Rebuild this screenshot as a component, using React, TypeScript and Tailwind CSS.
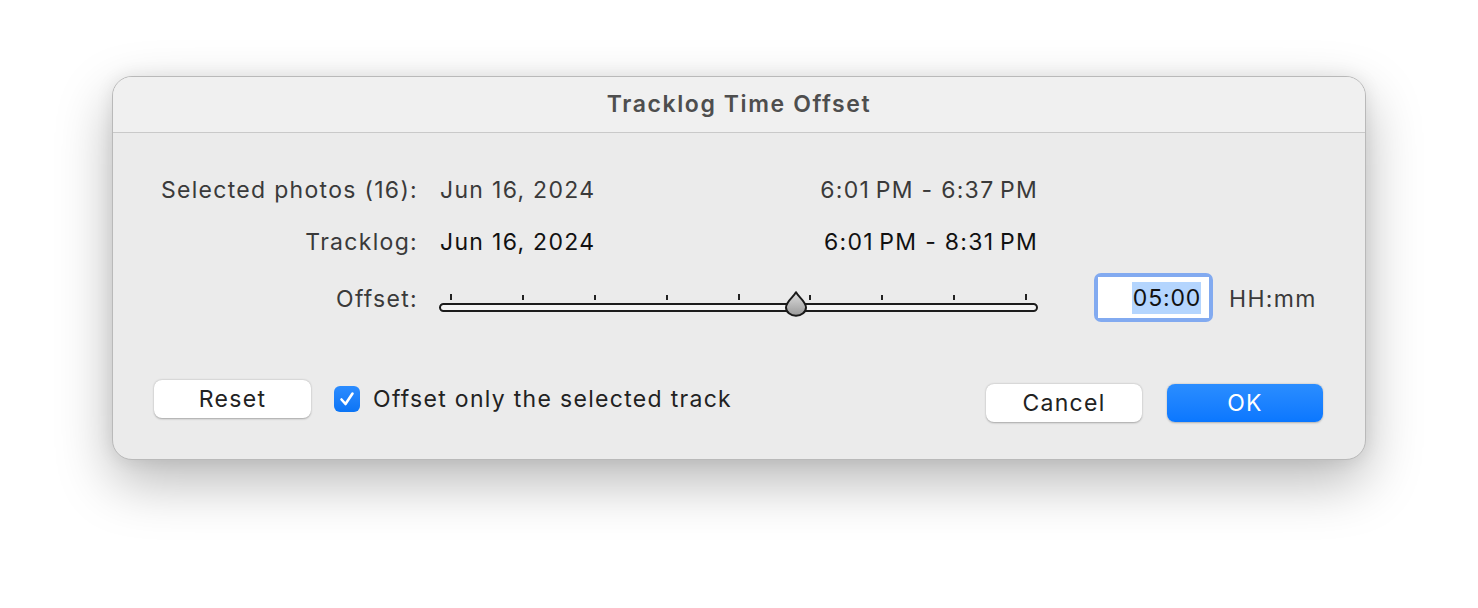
import React from "react";

function Thumb() {
  return (
    <svg width="26" height="28" viewBox="0 0 26 28" className="absolute left-[344px] top-[-13px]">
      <defs>
        <linearGradient id="tg" x1="0" y1="0" x2="0" y2="1">
          <stop offset="0" stopColor="#dedede" />
          <stop offset="1" stopColor="#9a9a9a" />
        </linearGradient>
      </defs>
      <path
        d="M13 2.2 C 15 6.5, 23 11.5, 23 17.5 A 10 8.2 0 0 1 3 17.5 C 3 11.5, 11 6.5, 13 2.2 Z"
        fill="url(#tg)"
        stroke="#1a1a1a"
        strokeWidth="2"
        strokeLinejoin="round"
      />
    </svg>
  );
}

function Slider() {
  const ticks = [0, 1, 2, 3, 4, 5, 6, 7, 8];
  return (
    <div className="relative w-[599px] h-[30px]">
      <div className="absolute left-0 right-0 top-[9px] flex justify-between px-[11px]">
        {ticks.map((t) => (
          <div
            key={t}
            className={
              t === 0 || t === 4 || t === 8
                ? "w-[2px] h-[6px] bg-[#222]"
                : "w-[2px] h-[5px] mt-[1px] bg-[#222]"
            }
          />
        ))}
      </div>
      <div className="absolute left-0 right-0 top-[18px] h-[9px] rounded-full border-2 border-[#1c1c1c] bg-[#f4f4f4]" />
      <div className="absolute left-0 top-[18px] w-full">
        <Thumb />
      </div>
    </div>
  );
}

export default function App() {
  return (
    <div
      className="w-[1478px] h-[608px] bg-white pt-[76px] pl-[112px]"
      style={{ fontFamily: "Inter, 'Noto Sans', sans-serif" }}
    >
      <div className="w-[1254px] h-[384px] rounded-[20px] border border-[#b9b9b9] bg-[#ebebeb] shadow-[0_22px_55px_rgba(0,0,0,0.28),0_0_18px_rgba(0,0,0,0.08)] overflow-hidden flex flex-col">
        <div className="h-[56px] shrink-0 bg-[#f0f0f0] border-b border-[#c9c9c9] flex items-center justify-center">
          <span className="text-[23px] font-semibold text-[#4e4e4e] tracking-[1.6px]">
            Tracklog Time Offset
          </span>
        </div>
        <div className="flex-1 pt-[31px] flex flex-col text-[23px] tracking-[1.3px]">
          <div className="h-[52px] flex items-center">
            <div className="w-[305px] text-right text-[#3a3a3a]">Selected photos (16):</div>
            <div className="ml-[22px] w-[598px] flex justify-between text-[#3a3a3a]">
              <span>Jun 16, 2024</span>
              <span>6:01&#8201;PM - 6:37&#8201;PM</span>
            </div>
          </div>
          <div className="h-[52px] flex items-center">
            <div className="w-[305px] text-right text-[#3a3a3a]">Tracklog:</div>
            <div className="ml-[22px] w-[598px] flex justify-between text-[#111]">
              <span>Jun 16, 2024</span>
              <span>6:01&#8201;PM - 8:31&#8201;PM</span>
            </div>
          </div>
          <div className="h-[62px] flex items-center">
            <div className="w-[305px] text-right text-[#3a3a3a]">Offset:</div>
            <div className="ml-[21px] mt-[2px]">
              <Slider />
            </div>
            <div className="ml-[56px] w-[119px] h-[49px] rounded-[7px] bg-[#82aaf0] p-[4px] -mt-[3px]">
              <div className="w-full h-full bg-white flex items-center justify-end pr-[8px]">
                <span className="bg-[#b4d5fe] text-[#111] pl-[1px] leading-[32px] tracking-[0.8px]">05:00</span>
              </div>
            </div>
            <div className="ml-[16px] text-[#3a3a3a]">HH:mm</div>
          </div>
          <div className="mt-[50px] flex items-start pl-[41px] pr-[42px]">
            <button className="w-[157px] h-[38px] rounded-[8px] bg-white text-[#222] shadow-[0_0.5px_2px_rgba(0,0,0,0.3)]">
              Reset
            </button>
            <div className="ml-[23px] h-[38px] flex items-center">
              <div className="w-[26px] h-[26px] rounded-[6px] bg-gradient-to-b from-[#2b8cff] to-[#0a74f5] flex items-center justify-center">
                <svg width="18" height="18" viewBox="0 0 18 18">
                  <path
                    d="M3.5 9.5 L7.5 14 L14.5 3.5"
                    fill="none"
                    stroke="white"
                    strokeWidth="2.6"
                    strokeLinecap="round"
                    strokeLinejoin="round"
                  />
                </svg>
              </div>
              <span className="ml-[13px] text-[#222]">Offset only the selected track</span>
            </div>
            <div className="ml-auto mt-[4px] flex gap-[25px]">
              <button className="w-[156px] h-[38px] rounded-[8px] bg-white text-[#222] shadow-[0_0.5px_2px_rgba(0,0,0,0.3)]">
                Cancel
              </button>
              <button className="w-[156px] h-[38px] rounded-[8px] bg-gradient-to-b from-[#2a8dff] to-[#0a77ff] text-white shadow-[0_0.5px_2px_rgba(0,0,0,0.25)]">
                OK
              </button>
            </div>
          </div>
        </div>
      </div>
    </div>
  );
}
